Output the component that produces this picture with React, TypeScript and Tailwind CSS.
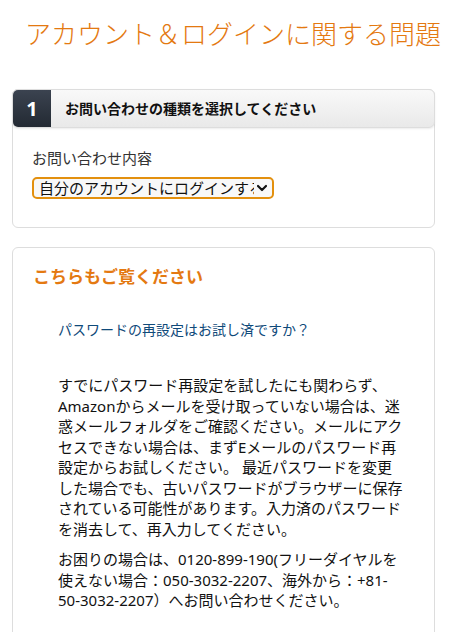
export default function App() {
  return (
    <div className="min-h-screen bg-white text-[#111] font-['Noto_Sans','Noto_Sans_CJK_JP',sans-serif]">
      <div className="px-3 pt-[16px]">
        <h1 className="pl-[13px] text-[26px] leading-[36px] font-light text-[#e47911] whitespace-nowrap">
          アカウント＆ログインに関する問題
        </h1>

        <div className="mt-[37px] w-[423px] rounded-md border border-[#ddd] bg-white">
          <div className="flex h-[39px] -mx-px -mt-px rounded-md overflow-hidden border border-[#ddd] bg-gradient-to-b from-[#f9f9f9] to-[#e9e9e9] shadow-[0_1px_2px_rgba(0,0,0,0.08)]">
            <div className="flex w-[38px] items-center justify-center bg-gradient-to-b from-[#3b4350] to-[#232a33] text-[20px] font-bold text-white">
              1
            </div>
            <div className="flex items-center pl-[14px] text-[14px] font-bold text-[#111]">
              お問い合わせの種類を選択してください
            </div>
          </div>
          <div className="px-[19px] pt-[19px] pb-[28px]">
            <div className="text-[15px] leading-[22px] text-[#333]">お問い合わせ内容</div>
            <div className="mt-[8px] flex h-[22px] w-[242px] items-center overflow-hidden rounded-[5px] border-2 border-[#e3900e] bg-[#f8f8f8] pl-[5px] pr-[4px]">
              <span className="flex-1 overflow-hidden whitespace-nowrap text-[15px] leading-[18px] text-[#111]">
                自分のアカウントにログインする
              </span>
              <svg className="ml-[2px] h-[12px] w-[12px] shrink-0" viewBox="0 0 12 12" fill="none">
                <path d="M2 4l4 4 4-4" stroke="#111" strokeWidth="2.2" strokeLinecap="round" strokeLinejoin="round" />
              </svg>
            </div>
          </div>
        </div>

        <div className="mt-[19px] w-[423px] rounded-md border border-[#ddd] bg-white pb-10">
          <h2 className="pl-[20px] pt-[16px] text-[17px] leading-[26px] font-bold text-[#e47911]">
            こちらもご覧ください
          </h2>
          <div className="pl-[45px] pr-[30px]">
            <p className="mt-[29px] text-[14px] leading-[22px] text-[#0f4a7a]">
              パスワードの再設定はお試し済ですか？
            </p>
            <p className="mt-[34px] text-[15px] leading-[20.5px] text-[#111]">
              すでにパスワード再設定を試したにも関わらず、Amazonからメールを受け取っていない場合は、迷惑メールフォルダをご確認ください。メールにアクセスできない場合は、まずEメールのパスワード再設定からお試しください。 最近パスワードを変更した場合でも、古いパスワードがブラウザーに保存されている可能性があります。入力済のパスワードを消去して、再入力してください。
            </p>
            <p className="mt-[10px] text-[15px] leading-[20.5px] text-[#111]">
              お困りの場合は、0120-899-190(フリーダイヤルを使えない場合：050-3032-2207、海外から：+81-50-3032-2207）へお問い合わせください。
            </p>
          </div>
        </div>
      </div>
    </div>
  )
}
